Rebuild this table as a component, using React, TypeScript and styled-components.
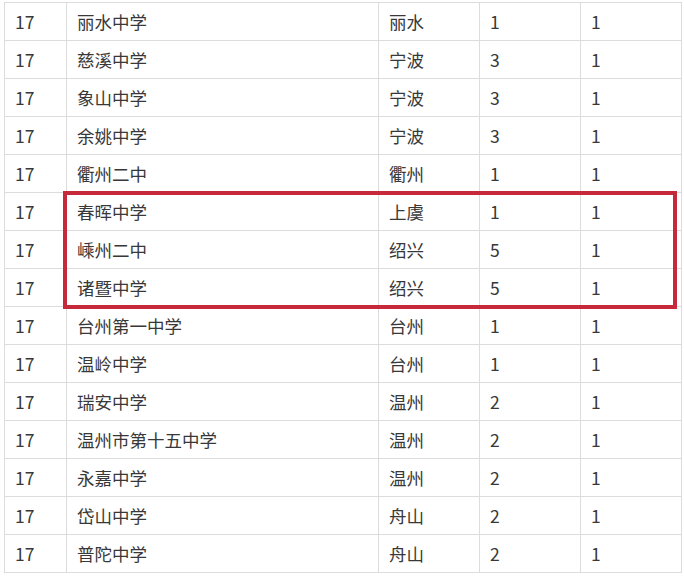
import styled, { createGlobalStyle } from "styled-components";

const GlobalStyle = createGlobalStyle`
    html, body {
        margin: 0;
        padding: 0;
        background: #fff;
    }
`;

const rows: [string, string, string, string, string][] = [
    ['17', '丽水中学', '丽水', '1', '1'],
    ['17', '慈溪中学', '宁波', '3', '1'],
    ['17', '象山中学', '宁波', '3', '1'],
    ['17', '余姚中学', '宁波', '3', '1'],
    ['17', '衢州二中', '衢州', '1', '1'],
    ['17', '春晖中学', '上虞', '1', '1'],
    ['17', '嵊州二中', '绍兴', '5', '1'],
    ['17', '诸暨中学', '绍兴', '5', '1'],
    ['17', '台州第一中学', '台州', '1', '1'],
    ['17', '温岭中学', '台州', '1', '1'],
    ['17', '瑞安中学', '温州', '2', '1'],
    ['17', '温州市第十五中学', '温州', '2', '1'],
    ['17', '永嘉中学', '温州', '2', '1'],
    ['17', '岱山中学', '舟山', '2', '1'],
    ['17', '普陀中学', '舟山', '2', '1'],
];

const widths = [62, 312, 101, 101, 101];

const Page = styled.div`
    padding: 2px 0 0 4px;
`;

const Frame = styled.div`
    position: relative;
    width: 677px;
`;

const Table = styled.table`
    border-collapse: collapse;
    table-layout: fixed;
    width: 677px;
    font-family: "Noto Sans CJK SC", "Noto Sans", sans-serif;
    font-size: 17.5px;
    color: #383838;
`;

const Cell = styled.td<{ $w: number }>`
    width: ${p => p.$w}px;
    height: 38px;
    padding: 0 0 0 10px;
    box-sizing: border-box;
    border: 1px solid #dcdcdc;
    vertical-align: middle;
    white-space: nowrap;
    line-height: 1;
`;

const Highlight = styled.div`
    position: absolute;
    left: 59px;
    top: 189px;
    width: 614px;
    height: 118px;
    border: 4px solid #c62a3a;
    box-sizing: border-box;
    pointer-events: none;
`;

const App = () => {
    return (
        <>
            <GlobalStyle />
            <Page>
                <Frame>
                    <Table>
                        <tbody>
                            {rows.map((row, i) => (
                                <tr key={i}>
                                    {row.map((text, j) => (
                                        <Cell key={j} $w={widths[j]}>{text}</Cell>
                                    ))}
                                </tr>
                            ))}
                        </tbody>
                    </Table>
                    <Highlight />
                </Frame>
            </Page>
        </>
    );
};

export default App;
